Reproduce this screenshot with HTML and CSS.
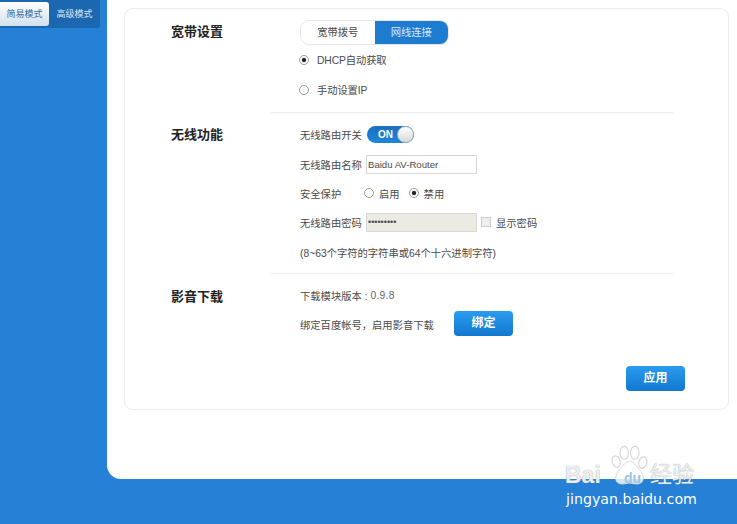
FILE: index.html
```html
<!DOCTYPE html>
<html lang="zh">
<head>
<meta charset="utf-8">
<title>路由设置</title>
<link rel="stylesheet" href="styles.css">
</head>
<body>
<div class="page">
  <aside class="side">
    <div class="modes">
      <span class="mode mode-on">简易模式</span>
      <span class="mode">高级模式</span>
    </div>
  </aside>
  <main class="main">
    <div class="panel">
      <section class="sec sec-a">
        <h2 class="title">宽带设置</h2>
        <div class="body">
          <div class="seg">
            <span class="seg-item">宽带拨号</span>
            <span class="seg-item seg-on">网线连接</span>
          </div>
          <div class="row row-r1"><i class="radio radio-on"></i><span class="rlabel">DHCP自动获取</span></div>
          <div class="row row-r2"><i class="radio"></i><span class="rlabel">手动设置IP</span></div>
        </div>
      </section>
      <hr class="line">
      <section class="sec sec-b">
        <h2 class="title">无线功能</h2>
        <div class="body">
          <div class="row row-sw"><span class="lab">无线路由开关</span><span class="switch"><b class="sw-text">ON</b><i class="knob"></i></span></div>
          <div class="row row-in"><span class="lab">无线路由名称</span><span class="input">Baidu AV-Router</span></div>
          <div class="row row-in2"><span class="lab lab-short">安全保护</span><i class="radio"></i><span class="opt">启用</span><i class="radio radio-on"></i><span class="opt">禁用</span></div>
          <div class="row row-in2"><span class="lab">无线路由密码</span><span class="input input-off">•••••••••</span><i class="check"></i><span class="show">显示密码</span></div>
          <div class="row row-note">(8~63个字符的字符串或64个十六进制字符)</div>
        </div>
      </section>
      <hr class="line">
      <section class="sec sec-c">
        <h2 class="title">影音下载</h2>
        <div class="body">
          <div class="row row-ver">下载模块版本 : <span class="ver">0.9.8</span></div>
          <div class="row row-bind"><span class="bind-text">绑定百度帐号，启用影音下载</span><span class="btn btn-bind">绑定</span></div>
        </div>
      </section>
      <div class="apply"><span class="btn">应用</span></div>
    </div>
  </main>
</div>
<div class="mark">
  <svg class="paw" width="39" height="41" viewBox="0 0 44 42" preserveAspectRatio="none"><g fill="rgba(255,255,255,.6)" stroke="#d6d6d6" stroke-width="1.3"><ellipse cx="7" cy="17" rx="4.5" ry="6" transform="rotate(-20 7 17)"/><ellipse cx="16" cy="8" rx="4.8" ry="6.5"/><ellipse cx="28" cy="8" rx="4.8" ry="6.5"/><ellipse cx="37" cy="18" rx="4.5" ry="6" transform="rotate(20 37 18)"/></g><path d="M22 17c-5 0-7 4-11 8-6 5-7 15 3 15 3 0 5-1 8-1s5 1 8 1c10 0 9-10 3-15-4-4-6-8-11-8z" fill="rgba(255,255,255,.8)" stroke="#d6d6d6" stroke-width="1"/></svg>
  <div class="mark-top">
    <span class="mark-bai">Bai</span>
    <span class="mark-du">du</span>
    <span class="mark-cn">经验</span>
  </div>
  <div class="mark-url">jingyan.baidu.com</div>
</div>
</body>
</html>
```
FILE: styles.css
```css
* { box-sizing: border-box; }
html, body { margin: 0; padding: 0; height: 524px; overflow: hidden; }
body {
  background: #2580d6;
  font-family: "Liberation Sans", "Noto Sans CJK SC", sans-serif;
  font-size: 10.3px;
  color: #4a4a4a;
  position: relative;
}
.page { display: flex; align-items: flex-start; height: 524px; }
.side { width: 107px; flex: none; }
.modes {
  width: 100px; height: 28px; padding-top: 2px;
  display: flex; align-items: flex-start;
  background: #1c68b0;
  border-radius: 0 0 3px 0;
}
.mode { width: 51px; height: 24px; line-height: 24px; text-align: center; color: #dbe9f7; font-size: 9px; }
.mode-on {
  width: 49px;
  background: linear-gradient(#fff, #d3e0ec);
  color: #2a6da8;
  border-radius: 0 3px 3px 0;
}
.main {
  flex: 1; height: 479px;
  background: #fff;
  border-radius: 0 0 0 14px;
  padding: 8px 8px 0 17px;
}
.panel {
  height: 402px;
  border: 1px solid #ececec;
  border-radius: 9px;
  padding-left: 46px;
}
.sec { display: flex; align-items: flex-start; }
.sec-a { height: 103px; padding-top: 11px; }
.sec-b { height: 160px; padding-top: 9px; }
.sec-c { height: 92px; padding-top: 9px; }
.title {
  width: 129px; flex: none; margin: 0;
  font-size: 13px; line-height: 24px; font-weight: 700; color: #222;
}
.sec-b .title { margin-top: 1px; }
.sec-c .title { margin-top: 2px; }
.line {
  margin: 0 55px 0 100px; height: 1px; border: 0;
  background: #ececec;
}
.body { flex: 1; }
.row { display: flex; align-items: center; height: 24px; white-space: pre; }
.seg {
  display: flex; width: 149px; height: 25px;
  border: 1px solid #e6e6e6; border-radius: 9px; overflow: hidden;
}
.seg-item { flex: 1; line-height: 23px; text-align: center; }
.seg-on { background: #1e7cd0; color: #d5e9fb; }
.row-r1 { margin-top: 3px; }
.row-r2 { margin-top: 6px; }
.radio {
  width: 10px; height: 10px; flex: none; border-radius: 50%;
  border: 1px solid #999; background: #fff; position: relative;
  margin-left: -1px;
}
.radio-on::after {
  content: ""; position: absolute; left: 2px; top: 2px;
  width: 4px; height: 4px; border-radius: 50%; background: #222;
  box-shadow: 0 0 1px #222;
}
.rlabel { margin: -2px 0 0 8px; letter-spacing: -.1px; }
.lab { width: 66px; flex: none; }
.lab-short { width: 65px; }
.switch {
  width: 47px; height: 17px; margin-left: 1px;
  display: flex; align-items: center; justify-content: space-between;
  background: linear-gradient(#1a6fc0, #1f85d8); border-radius: 9px;
}
.sw-text { color: #fff; font-size: 10px; margin-left: 11px; }
.knob {
  width: 17px; height: 17px; border-radius: 50%;
  background: linear-gradient(#fff, #d8d8d8); border: 1px solid #9db4c9;
}
.row-in { margin-top: 6px; }
.row-in2 { margin-top: 5px; }
.input {
  width: 111px; height: 19px;
  border: 1px solid #d8d8d8; line-height: 17px; padding-left: 1px;
  font-size: 9.6px; background: #fff;
}
.input-off { background: #ebebe4; font-size: 9px; }
.opt { margin: 0 10px 0 5px; }
.check { width: 10px; height: 10px; margin-left: 4px; border: 1px solid #ccc; background: #eee; }
.show { margin-left: 5px; }
.row-note { margin-top: 6px; }
.ver { letter-spacing: .3px; color: #666; }
.row-bind { margin-top: 5px; }
.bind-text { width: 154px; flex: none; }
.btn {
  width: 59px; height: 25px; line-height: 25px; text-align: center;
  border-radius: 4px; color: #fff; font-size: 12px; font-weight: 700;
  background: linear-gradient(#2a9cf0, #1277cf);
}
.btn-bind { margin-top: -2px; }
.apply {
  display: flex; justify-content: flex-end;
  margin: 0 43px 0 0;
}
.mark {
  position: absolute; left: 565px; top: 444px; width: 140px;
  color: #fff;
}
.paw { position: absolute; left: 45px; top: 1px; }
.mark-top { display: flex; align-items: center; height: 46px; padding: 21px 0 5px; position: relative; }
.mark-bai, .mark-cn { color: rgba(255,255,255,.85); text-shadow: 0 0 1px #888; line-height: 20px; }
.mark-bai { width: 50px; font-size: 23px; font-weight: 700; }
.mark-du { width: 35px; padding-top: 6px; font-size: 14px; font-weight: 700; line-height: 20px; color: #9fc3e6; text-align: center; }
.mark-cn { font-size: 22px; }
.mark-url { font-family: "DejaVu Sans", sans-serif; font-size: 14.2px; line-height: 18px; margin-left: 1px; }
```
